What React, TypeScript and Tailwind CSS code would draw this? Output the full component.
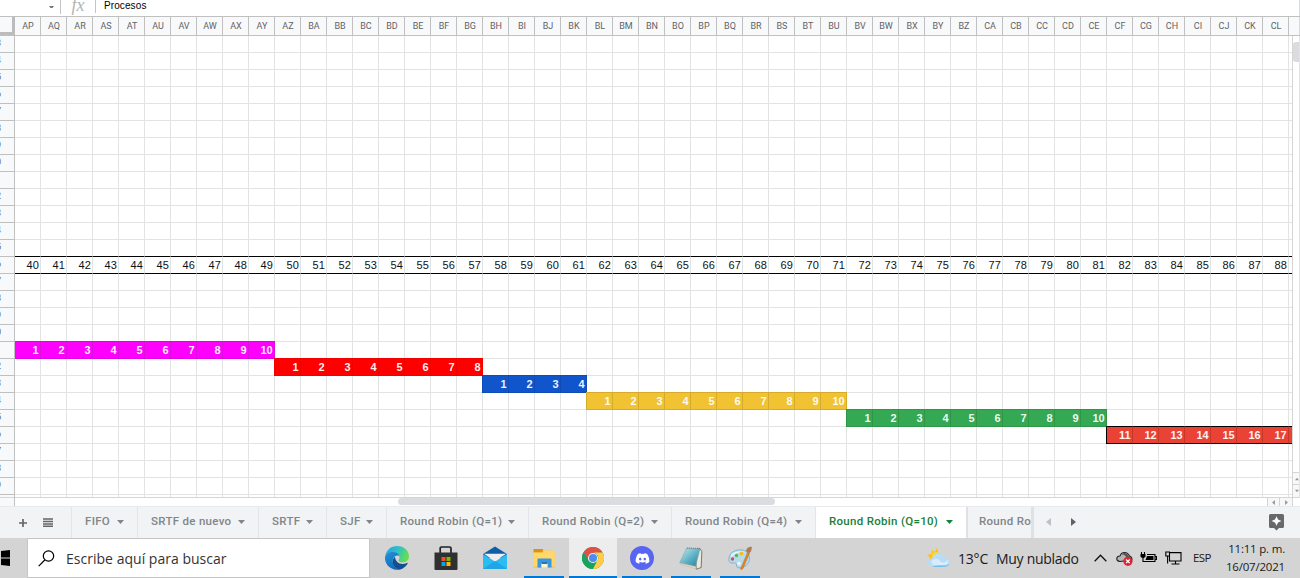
import React from "react";
import { FaDiscord } from "react-icons/fa";

type Cell = { text: string; kind: string };

const KINDS: Record<string, string> = {
  magenta: "bg-[#ff00ff] border-t-[#e600e6] border-b-[#e600e6] border-l-[#d911d9] border-r-[#d911d9]",
  red: "bg-[#ff0000] border-[#f20000]",
  blue: "bg-[#1155cc] border-[#0f4cb8]",
  yellow: "bg-[#f1c232] border-[#d5ab2c]",
  green: "bg-[#34a853] border-[#2e9549]",
  coral: "bg-[#ea4335] border-l-[#c4382c] border-r-[#c4382c] border-t-black border-b-black",
};

const RUNS = [
  { row: 18, start: 0, count: 10, first: 1, kind: "magenta" },
  { row: 19, start: 10, count: 8, first: 1, kind: "red" },
  { row: 20, start: 18, count: 4, first: 1, kind: "blue" },
  { row: 21, start: 22, count: 10, first: 1, kind: "yellow" },
  { row: 22, start: 32, count: 10, first: 1, kind: "green" },
  { row: 23, start: 42, count: 8, first: 11, kind: "coral" },
];

const COLS = Array.from({ length: 49 }, (_, i) => {
  const n = 15 + i;
  return String.fromCharCode(65 + Math.floor(n / 26)) + String.fromCharCode(65 + (n % 26));
});
const ROWS = Array.from({ length: 27 }, (_, i) => i);

function cellAt(row: number, col: number): Cell | null {
  const run = RUNS.find((r) => r.row === row && col >= r.start && col < r.start + r.count);
  return run ? { text: col === 49 ? "" : String(run.first + col - run.start), kind: run.kind } : null;
}

function GridRow({ row }: { row: number }) {
  const black = row === 12 || row === 13;
  return (
    <div className="flex h-[17px] shrink-0">
      {Array.from({ length: 50 }, (_, col) => {
        const cell = cellAt(row, col);
        if (cell)
          return (
            <div
              key={col}
              className={`relative -ml-px -mt-px h-[18px] w-[27px] shrink-0 border pr-[1.3px] text-right text-[11px] leading-[17px] font-bold text-white/95 ${KINDS[cell.kind]} ${cell.kind === "coral" && col === 42 ? "border-l-black!" : ""}`}
            >
              {cell.text}
            </div>
          );
        return (
          <div
            key={col}
            className={`h-[17px] w-[26px] shrink-0 border-r border-b border-r-[#e2e3e3] pr-[1.200px] text-right text-[11px] leading-[17px] text-[#111] ${black ? "border-b-black" : "border-b-[#e2e3e3]"}`}
          >
            {row === 13 && col < 49 ? 40 + col : ""}
          </div>
        );
      })}
    </div>
  );
}

function Caret({ className }: { className: string }) {
  return (
    <svg className={`h-[4px] w-[7px] shrink-0 ${className}`} viewBox="0 0 7 4">
      <path d="M0 0h7L3.5 4z" fill="currentColor" />
    </svg>
  );
}

const TABS = [
  { name: "FIFO", w: "w-[66px]" },
  { name: "SRTF de nuevo", w: "w-[121px]" },
  { name: "SRTF", w: "w-[68px]" },
  { name: "SJF", w: "w-[60px]" },
  { name: "Round Robin (Q=1)", w: "w-[142px]" },
  { name: "Round Robin (Q=2)", w: "w-[143px]" },
  { name: "Round Robin (Q=4)", w: "w-[144px]" },
  { name: "Round Robin (Q=10)", w: "w-[151px]", active: true },
];

function Edge() {
  return (
    <svg className="size-6" viewBox="0 0 24 24">
      <defs>
        <linearGradient id="eg" x1="0" y1="0" x2="1" y2="0.3"><stop offset="0.2" stopColor="#2aa8df" /><stop offset="0.6" stopColor="#32c4bb" /><stop offset="1" stopColor="#65dc56" /></linearGradient>
        <linearGradient id="eb" x1="0" y1="0" x2="0.6" y2="1"><stop offset="0" stopColor="#2193d8" /><stop offset="1" stopColor="#116bbd" /></linearGradient>
      </defs>
      <path d="M0.3 10C1.3 4 6 0 12 0c7 0 12 4.800 12 10.300 0 4-3 6.200-6.300 6.200-2.600 0-4.200-1-4.200-1.900 0-.7 1-1.100 1-2.900 0-3-3.200-5.200-7-5.200C4.200 6.500 1.600 7.800.3 10z" fill="url(#eg)" />
      <path d="M0 11.500C.4 8.300 3.500 6 7.500 6c3.500 0 6.300 1.600 6.900 4-2.700-1.300-6 .3-6.600 4-.7 4.600 2.700 8.600 6.700 9.700C6.800 24.800-.5 19-0 11.500z" fill="url(#eb)" />
      <path d="M10 10.800c-4.500 3.700-2.300 11.300 4 13 3.500-.5 7-3.200 8.600-6.300.3-.6-.2-.9-.7-.6-5.200 2.800-11.500.3-11.900-6.100z" fill="#134f91" />
    </svg>
  );
}

function Store() {
  return (
    <svg className="-mt-px h-6 w-6" viewBox="0 0 24 24">
      <path d="M6.200 7V2.200Q6.200 1 7.400 1h8.200Q17 1 17 2.200V7" fill="none" stroke="#222" strokeWidth="1.700" />
      <path d="M.5 6.500h23V23q0 1-1 1h-21q-1 0-1-1z" fill="#303030" />
      <path d="M7.500 11h4v4h-4z" fill="#f25022" /><path d="M12.500 11h4v4h-4z" fill="#7fba00" />
      <path d="M7.500 16h4v4h-4z" fill="#00a4ef" /><path d="M12.500 16h4v4h-4z" fill="#ffb900" />
    </svg>
  );
}

function Mail() {
  return (
    <svg className="h-6 w-6" viewBox="0 0 24 24">
      <path d="M0 8L12 .5 24 8v4H0z" fill="#0f5fa8" />
      <path d="M0 8l12 7.500L24 8v15H0z" fill="#2bbcf2" />
      <path d="M1 7.800h22L12 15.500z" fill="#eee" />
      <path d="M0 23L12 14.800 24 23z" fill="#1493df" opacity=".55" />
    </svg>
  );
}

function Folder() {
  return (
    <svg className="h-6 w-6" viewBox="0 0 24 24">
      <path d="M1.500 3h9l1.500 1.500h9.500q1 0 1 1V22h-21z" fill="#fbc94b" />
      <path d="M1.500 3h9.500v2l-1 1.200H1.500z" fill="#d89412" />
      <path d="M1.500 7h9l1.500-2h10.500v15h-21z" fill="#ffd869" />
      <path d="M5.500 21.500V13.500q0-1 1-1h12q1 0 1 1v8h-4V17h-6v4.500z" fill="#3a96dd" />
      <path d="M9.500 16.800h6v4.700h-6z" fill="#fff4cf" /><path d="M9.500 16h6v2h-6z" fill="#2476bd" />
    </svg>
  );
}

function Chrome() {
  return (
    <svg className="-ml-px size-[22px]" viewBox="0 0 24 24">
      <circle cx="12" cy="12" r="12" fill="#1aa260" />
      <path d="M1.600 6A12 12 0 0 1 22.400 6L12 7v5z" fill="#de5246" />
      <path d="M22.400 6A12 12 0 0 1 12 24l4.700-9.300A5.500 5.500 0 0 0 12 6z" fill="#ffce44" />
      <path d="M1.600 6l5.600 9.100L12 12V6z" fill="#de5246" /><path d="M1.600 6l5.700 9.500a12 12 0 0 0 3.700 1.900L12 24A12 12 0 0 1 1.600 6z" fill="#1aa260" />
      <circle cx="12" cy="12" r="5.500" fill="#f1f1f1" /><circle cx="12" cy="12" r="4.400" fill="#4b8bf4" />
    </svg>
  );
}

function Notepad() {
  return (
    <svg className="size-6" viewBox="0 0 24 24">
      <path d="M16.500 4L21 2.500l1.800 3-.6 16-5 1.700z" fill="#ece9dc" stroke="#5a5f5f" strokeWidth=".8" />
      <defs><linearGradient id="np" x1="0" y1="0" x2="1" y2="1"><stop stopColor="#c6eaf2" /><stop offset=".55" stopColor="#5bb0c4" /><stop offset="1" stopColor="#297f98" /></linearGradient></defs>
      <path d="M7.500 2.500L21 3l-4.500 17.200L.8 16.500z" fill="url(#np)" stroke="#6aa3b1" strokeWidth=".5" />
      <path d="M.8 17l15.700 3.800 1 2L2 18.300z" fill="#e8e3cd" stroke="#9b947b" strokeWidth=".3" />
      <path d="M7.800 2L21 2.500" stroke="#6b777b" strokeWidth="1.200" strokeDasharray="1 1" />
    </svg>
  );
}

function Paint() {
  return (
    <svg className="size-6" viewBox="0 0 24 24">
      <path d="M2 9C5 3.500 14 2.500 18.500 5.500c4.500 4 4 12-2 15-4 2.300-8.500 1.500-8-1 .4-2.500-1.500-3-4-2.500C.5 17.500 0 13 2 9z" fill="#b5dced" stroke="#6da4bf" strokeWidth=".7" />
      <path d="M3 8.500C7 4.500 15 4.500 18 6.500c-5-1-11 0-15 5z" fill="#e3f6fb" />
      <circle cx="4.500" cy="13" r="1.700" fill="#e04a43" /><circle cx="8.500" cy="9.500" r="1.700" fill="#59b64a" /><circle cx="13.500" cy="7.500" r="1.900" fill="#f3bd32" /><circle cx="11" cy="17.500" r="1.800" fill="#eef8fa" />
      <path d="M19.500 6.500l2 .8L15 22.500q-2 2-2.500.5z" fill="#e98520" stroke="#af5b19" strokeWidth=".4" />
      <path d="M18.700 6.300q-1.200-3 .8-4.300Q22 .3 24 1q-.3 4-2.300 6z" fill="#b17b4e" />
    </svg>
  );
}

function Weather() {
  return (
    <svg className="h-[20px] w-[23px]" viewBox="0 0 23 20">
      <path d="M9.500 0l2 4.200L7 8 2.500 13 3 9.500 0 7 4.500 6 5 2l3 2z" fill="#fbc313" />
      <circle cx="9" cy="8" r="4" fill="#ffd53d" />
      <path d="M5 18.500q-4-.5-4-4t4-4q1.500-5 6-5t5.500 4q5.500 0 6 5t-5 4.500z" fill="#b9ddf7" />
      <path d="M4 13q6-4 9 0t8-1q1 5-3 5H6z" fill="#d8edfc" /><path d="M5 18.500q6 1 12.500.2 4-.3 4.800-3Q19 18 14 17.500T5 18.500z" fill="#79bdea" />
    </svg>
  );
}

const RUNNING = "border-b-2 border-[#0078d7]";
const APPS = [
  { el: <Edge />, cls: "w-12" },
  { el: <Store />, cls: "w-12 ml-px" },
  { el: <Mail />, cls: "w-12 ml-px" },
  { el: <Folder />, cls: `w-10 ml-[5px] pt-[2px] ${RUNNING}` },
  { el: <Chrome />, cls: `w-12 ml-[5px] pt-[2px] bg-[#ededed] ${RUNNING}` },
  {
    el: <span className="flex size-6 items-center justify-center rounded-full bg-[#5865f2]"><FaDiscord className="size-[15px] text-white" /></span>,
    cls: `w-10 ml-[5px] pt-[2px] ${RUNNING}`,
  },
  { el: <Notepad />, cls: `w-10 ml-[9px] pt-[2px] ${RUNNING}` },
  { el: <Paint />, cls: `w-10 ml-[9px] pt-[2px] ${RUNNING}` },
];

export default function App() {
  return (
    <div className="flex h-[578px] w-[1300px] flex-col overflow-hidden bg-white font-['Liberation_Sans',sans-serif]">
      <div className="flex h-[16px] shrink-0 items-start border-r border-[#d9dadb]">
        <div className="flex h-[14px] w-[61px] items-start justify-end border-r border-[#c4c4c4] pt-[6px] pr-[6px]">
          <svg className="h-[2px] w-[5px] text-[#777]" viewBox="0 0 5 2"><path d="M0 0h5L3.500 2h-2z" fill="currentColor" /></svg>
        </div>
        <div className="flex h-[13px] w-[35px] justify-center border-r border-[#c4c4c4] font-['Liberation_Serif',serif] text-[18px] leading-[10px] text-[#b4b4b4] italic">
          fx
        </div>
        <div className="pl-[8px] text-[10px] leading-[12px] tracking-[0.100px] text-black">Procesos</div>
      </div>

      <div className="flex h-[20px] shrink-0 border-y border-[#c0c0c0] bg-[#f8f9fa]">
        <div className="h-[18px] w-[15px] shrink-0 border-r-3 border-b-3 border-[#bcbcbc]" />
        {COLS.map((c) => (
          <div key={c} className="w-[26px] shrink-0 border-r border-[#c0c0c0] pl-px text-center font-['Roboto',sans-serif] text-[9px] leading-[18px] text-[#5f6368]">
            {c}
          </div>
        ))}
        <div className="ml-auto w-px bg-[#d9dadb]" />
      </div>

      <div className="flex h-[470px] shrink-0">
        <div className="flex w-[15px] shrink-0 flex-col border-r border-[#c0c0c0] bg-[#f8f9fa]">
          <div className="flex h-[462px] shrink-0 flex-col overflow-hidden border-b border-[#d5d5d5]">
            {ROWS.map((r) => (
              <div key={r} className="flex h-[17px] w-full shrink-0 overflow-hidden border-b border-[#c0c0c0] font-['Roboto',sans-serif] text-[9px] leading-[15px] text-[#5f6368]">
                <span className="-ml-[4px]">{(r + 3) % 10}</span>
              </div>
            ))}
          </div>
        </div>
        <div className="flex w-[1285px] flex-col">
          <div className="flex h-[462px]">
            <div className="w-[1278px] overflow-hidden border-r border-b border-[#d5d5d5]">
              {ROWS.map((r) => (
                <GridRow key={r} row={r} />
              ))}
              <GridRow row={27} />
            </div>
            <div className="flex w-[7px] flex-col border-r border-[#e3e3e3]">
              <div className="mt-[6px] h-5 w-full rounded-l-[3px] bg-[#dadce0]" />
              <div className="mt-auto flex h-[12px] items-center justify-end border-t border-[#d5d5d5] bg-[#f8f8f8]">
                <Caret className="w-[4px]! rotate-180 text-[#999]" />
              </div>
              <div className="flex h-[14px] items-center justify-end border-y border-[#d5d5d5] bg-[#f8f8f8]">
                <Caret className="w-[4px]! text-[#999]" />
              </div>
            </div>
          </div>
          <div className="flex h-[8px] items-start">
            <div className="ml-[383px] h-[7px] w-[377px] rounded-full bg-[#dadce0]" />
            <div className="ml-auto flex h-[8px]">
              <div className="flex w-[12px] items-center justify-center border-l border-[#d5d5d5] bg-[#f8f8f8]"><Caret className="h-[3px]! w-[5px]! rotate-90 text-[#999]" /></div>
              <div className="mr-[7px] flex w-[14px] items-center justify-center border-x border-[#d5d5d5] bg-[#f8f8f8]"><Caret className="h-[3px]! w-[5px]! -rotate-90 text-[#999]" /></div>
            </div>
          </div>
        </div>
      </div>

      <div className="flex h-[32px] shrink-0 border-t border-[#e8eaed] bg-[#f1f3f4] font-['Roboto',sans-serif] text-[11.5px] font-medium text-[#80868b]">
        <div className="flex w-[71px] items-center pl-[19px]">
          <svg className="size-[8px]" viewBox="0 0 9 9"><path d="M4.500 0v9M0 4.500h9" stroke="#666" strokeWidth="1.900" /></svg>
          <svg className="ml-[16px] h-[9px] w-[10px]" viewBox="0 0 10 9"><path d="M0 1h10M0 3.500h10M0 6h10M0 8.300h10" stroke="#666" strokeWidth="1.400" /></svg>
        </div>
        {TABS.map((t) => (
          <div
            key={t.name}
            className={`flex shrink-0 items-center justify-between border-l border-[#e3e5e8] pr-[13px] pl-[13px] whitespace-nowrap ${t.w} ${t.active ? "bg-white text-[#188038]" : ""}`}
          >
            <span className="-mt-px tracking-[0.300px]">{t.name}</span>
            <Caret className={`-mt-[2px] ${t.active ? "text-[#188038]" : "text-[#80868b]"}`} />
          </div>
        ))}
        <div className="flex w-[68px] items-center overflow-hidden border-r-3 border-l-2 border-[#dfe1e4] pl-[11px] whitespace-nowrap">
          <span className="-mt-px tracking-[0.300px]">Round Robin</span>
        </div>
        <div className="flex items-center">
          <svg className="-mt-[2px] ml-[12px] h-[8px] w-[5px]" viewBox="0 0 5 8"><path d="M5 0v8L0 4z" fill="#bdc1c6" /></svg>
          <svg className="-mt-[2px] ml-[20px] h-[8px] w-[5px]" viewBox="0 0 5 8"><path d="M0 0v8l5-4z" fill="#5f6368" /></svg>
        </div>
        <svg className="mt-[7px] mr-[16px] ml-auto h-[17px] w-[15px]" viewBox="0 0 15 17">
          <path d="M1.500 0h12Q15 0 15 1.500v11q0 1.500-1.500 1.500H10l-2.500 2.500L5 14H1.500Q0 14 0 12.500v-11Q0 0 1.500 0z" fill="#696969" />
          <path d="M7.500 2.200L9 5.600 12.500 7 9 8.500l-1.500 3.300L6 8.500 2.500 7 6 5.600z" fill="white" />
        </svg>
      </div>

      <div className="flex h-[40px] shrink-0 bg-[#d4d4d4] font-['Open_Sans','Noto_Sans',sans-serif] text-[#1a1a1a]">
        <div className="flex w-[27px] items-center">
          <svg className="ml-px h-[16px] w-[9px]" viewBox="0 0 9 16"><path d="M0 1L9 0v7.500H0zM0 8.500h9V16l-9-1z" fill="black" /></svg>
        </div>
        <div className="flex w-[343px] items-center border border-[#c6c6c6] bg-white pl-[10px]">
          <svg className="h-[17px] w-[17px]" viewBox="0 0 17 17" fill="none" stroke="black" strokeWidth="1.200"><circle cx="10.500" cy="6" r="5.200" /><path d="M6.800 10L.7 16.200" /></svg>
          <span className="ml-[11px] text-[14px] tracking-[0.020px] whitespace-nowrap text-[#333]">Escribe aquí para buscar</span>
        </div>
        <div className="ml-[3px] flex">
          {APPS.map((a, i) => (
            <div key={i} className={`flex h-[40px] shrink-0 items-center justify-center ${a.cls}`}>{a.el}</div>
          ))}
        </div>
        <div className="ml-auto flex items-center pr-[15px]">
          <Weather />
          <span className="ml-[8px] w-[31px] text-[14px] tracking-[-0.200px] whitespace-nowrap">13°C</span>
          <span className="ml-[7px] w-[84px] text-[14px] tracking-[-0.300px] whitespace-nowrap">Muy nublado</span>
          <svg className="ml-[14px] h-[8px] w-[13px]" viewBox="0 0 13 8" fill="none" stroke="#111" strokeWidth="1.300"><path d="M.7 7.200l5.800-6 5.800 6" /></svg>
          <svg className="ml-[9px] h-[16px] w-[17px]" viewBox="0 0 17 16">
            <path d="M4 11.500Q.6 11 .8 8.500T4 6Q5 2.500 8.500 2.500T13.500 6q2.500.5 2.500 4z" fill="#b4b4b4" stroke="#222" strokeWidth="1.100" />
            <path d="M5 5q4.500-4.500 8 1.500l2 2-3 .5Q8 3 5 5z" fill="#555" />
            <circle cx="11.900" cy="11.300" r="4.600" fill="#dc2434" /><path d="M10.100 9.500l3.600 3.600M13.700 9.500l-3.600 3.600" stroke="white" strokeWidth="1.300" />
          </svg>
          <svg className="ml-[7px] h-[14px] w-[17px]" viewBox="0 0 17 14">
            <path d="M7 3.500h8v7H4.500M15.500 5.500h1v3h-1" fill="none" stroke="black" strokeWidth="1.100" /><path d="M7 5h6.500v4H5.500z" fill="black" />
            <path d="M1.500 1v3M4.500 1v3M3 6v4.500h2" stroke="black" strokeWidth="1.100" fill="none" /><path d="M.5 3h5v2.500L4 7H2L.5 5.500z" />
          </svg>
          <svg className="ml-[8px] h-[14px] w-[17px]" viewBox="0 0 17 14" fill="none" stroke="black" strokeWidth="1.100">
            <path d="M5 1.600h11v8.400H4.500V5M10.500 10v2.500M6.500 13h8M.8 1h3.700v4H.8zM2.600 5v7.500" />
          </svg>
          <span className="ml-[11px] w-[19px] text-[11.5px] tracking-[-0.600px]">ESP</span>
          <div className="ml-[13px] flex w-[60px] flex-col items-end text-[11.5px] leading-[18px] tracking-[-0.200px] whitespace-nowrap">
            <span>11:11 p. m.</span>
            <span>16/07/2021</span>
          </div>
        </div>
      </div>
    </div>
  );
}
